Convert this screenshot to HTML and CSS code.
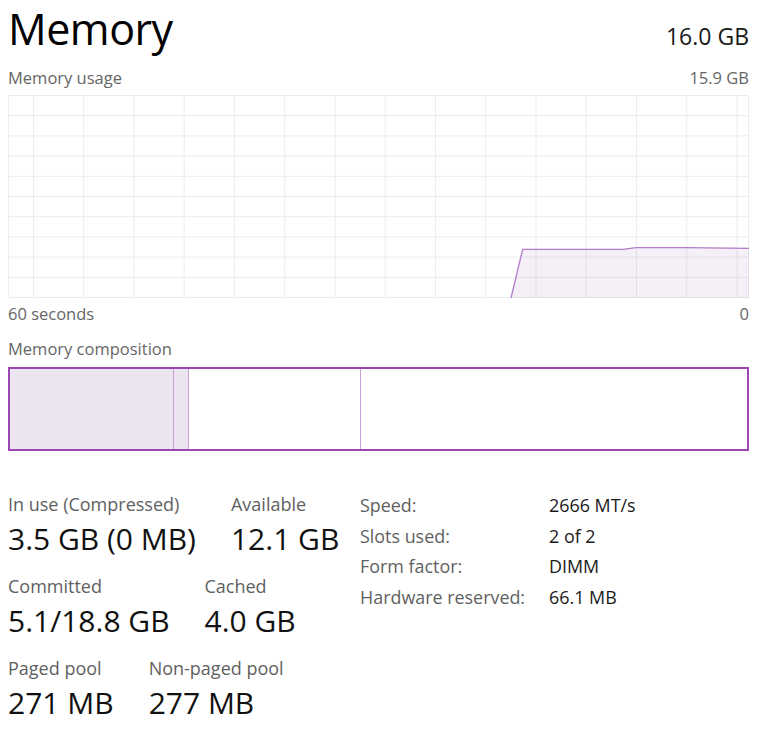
FILE: index.html
```html
<!DOCTYPE html>
<html lang="en">
<head>
<meta charset="utf-8">
<title>Memory</title>
<link rel="stylesheet" href="styles.css">
</head>
<body>
<main class="page">
  <header class="head">
    <h1 class="title">Memory</h1>
    <div class="total">16.0 GB</div>
  </header>

  <div class="sub-row first">
    <span>Memory usage</span>
    <span>15.9 GB</span>
  </div>

  <div class="chart">
    <svg class="chart-svg" viewBox="0 0 741 203" width="741" height="203" preserveAspectRatio="none">
      <g class="grid">
        <line x1="0" y1="0.5" x2="741" y2="0.5"/>
        <line x1="0" y1="20.7" x2="741" y2="20.7"/>
        <line x1="0" y1="40.9" x2="741" y2="40.9"/>
        <line x1="0" y1="61.1" x2="741" y2="61.1"/>
        <line x1="0" y1="81.3" x2="741" y2="81.3"/>
        <line x1="0" y1="101.5" x2="741" y2="101.5"/>
        <line x1="0" y1="121.7" x2="741" y2="121.7"/>
        <line x1="0" y1="141.9" x2="741" y2="141.9"/>
        <line x1="0" y1="162.1" x2="741" y2="162.1"/>
        <line x1="0" y1="182.3" x2="741" y2="182.3"/>
        <line x1="0" y1="202.5" x2="741" y2="202.5"/>
        <line x1="0.5" y1="0" x2="0.5" y2="203"/>
        <line x1="25.5" y1="0" x2="25.5" y2="203"/>
        <line x1="75.7" y1="0" x2="75.7" y2="203"/>
        <line x1="126" y1="0" x2="126" y2="203"/>
        <line x1="176.2" y1="0" x2="176.2" y2="203"/>
        <line x1="226.5" y1="0" x2="226.5" y2="203"/>
        <line x1="276.7" y1="0" x2="276.7" y2="203"/>
        <line x1="327" y1="0" x2="327" y2="203"/>
        <line x1="377.2" y1="0" x2="377.2" y2="203"/>
        <line x1="427.5" y1="0" x2="427.5" y2="203"/>
        <line x1="477.7" y1="0" x2="477.7" y2="203"/>
        <line x1="528" y1="0" x2="528" y2="203"/>
        <line x1="578.2" y1="0" x2="578.2" y2="203"/>
        <line x1="628.5" y1="0" x2="628.5" y2="203"/>
        <line x1="678.7" y1="0" x2="678.7" y2="203"/>
        <line x1="729" y1="0" x2="729" y2="203"/>
        <line x1="740.5" y1="0" x2="740.5" y2="203"/>
      </g>
      <polygon class="area" points="503,203 514.7,154.3 615,154.3 628,152.7 678.7,152.7 741,153.3 741,203"/>
      <polyline class="line" points="503,203 514.7,154.3 615,154.3 628,152.7 678.7,152.7 741,153.3"/>
    </svg>
  </div>

  <div class="sub-row axis">
    <span>60 seconds</span>
    <span>0</span>
  </div>

  <div class="sub-row comp-label">
    <span>Memory composition</span>
  </div>

  <div class="comp">
    <div class="seg inuse" style="width:164px"></div>
    <div class="seg modified" style="width:15px"></div>
    <div class="seg standby" style="width:172px"></div>
    <div class="seg free"></div>
  </div>

  <section class="stats">
    <div class="stats-left">
      <div class="stat-row">
        <div class="stat">
          <div class="label">In use (Compressed)</div>
          <div class="value">3.5 GB (0 MB)</div>
        </div>
        <div class="stat">
          <div class="label">Available</div>
          <div class="value">12.1 GB</div>
        </div>
      </div>
      <div class="stat-row">
        <div class="stat">
          <div class="label">Committed</div>
          <div class="value">5.1/18.8 GB</div>
        </div>
        <div class="stat">
          <div class="label">Cached</div>
          <div class="value">4.0 GB</div>
        </div>
      </div>
      <div class="stat-row">
        <div class="stat">
          <div class="label">Paged pool</div>
          <div class="value">271 MB</div>
        </div>
        <div class="stat">
          <div class="label">Non-paged pool</div>
          <div class="value">277 MB</div>
        </div>
      </div>
    </div>

    <dl class="props">
      <dt>Speed:</dt><dd>2666 MT/s</dd>
      <dt>Slots used:</dt><dd>2 of 2</dd>
      <dt>Form factor:</dt><dd>DIMM</dd>
      <dt>Hardware reserved:</dt><dd>66.1 MB</dd>
    </dl>
  </section>
</main>
</body>
</html>
```

FILE: styles.css
```css
* {
  box-sizing: border-box;
}

html, body {
  margin: 0;
  padding: 0;
  background: #ffffff;
}

body {
  font-family: "Open Sans", "Noto Sans", "Liberation Sans", sans-serif;
  color: #1a1a1a;
  width: 768px;
  height: 738px;
  overflow: hidden;
}

.page {
  padding: 0 19px 0 8px;
}

.head {
  display: flex;
  justify-content: space-between;
  align-items: baseline;
}

.title {
  margin: 0;
  font-size: 43px;
  font-weight: 400;
  line-height: 58px;
  color: #000000;
  letter-spacing: -0.5px;
}

.total {
  font-size: 23px;
  line-height: 30px;
  color: #1a1a1a;
}

.sub-row {
  display: flex;
  justify-content: space-between;
  font-size: 16.5px;
  line-height: 22px;
  color: #666666;
}

.sub-row.first {
  margin-top: 9px;
}

.chart {
  margin-top: 6px;
  height: 203px;
}

.chart-svg {
  display: block;
}

.grid line {
  stroke: #ececec;
  stroke-width: 1;
}

.area {
  fill: rgba(140, 80, 175, 0.09);
  stroke: none;
}

.line {
  fill: none;
  stroke: #b27cc9;
  stroke-width: 1.3;
}

.sub-row.axis {
  margin-top: 5px;
}

.sub-row.comp-label {
  margin-top: 13px;
  font-size: 16.5px;
}

.comp {
  margin-top: 7px;
  height: 84px;
  border: 2px solid #9a47b3;
  display: flex;
}

.seg {
  height: 100%;
  flex: none;
  border-right: 1px solid #c9a1d8;
}

.seg.inuse,
.seg.modified {
  background: #ede4f1;
}

.seg.standby {
  background: #ffffff;
}

.seg.free {
  flex: 1;
  border-right: none;
  background: #ffffff;
}

.stats {
  margin-top: 41px;
  display: flex;
  align-items: flex-start;
}

.stats-left {
  width: 352px;
  display: flex;
  flex-direction: column;
  gap: 12px;
}

.stat-row {
  display: flex;
  gap: 35px;
}

.label {
  font-size: 18px;
  line-height: 24px;
  color: #5f5f5f;
  white-space: nowrap;
}

.value {
  font-size: 30px;
  line-height: 46px;
  color: #111111;
  white-space: nowrap;
}

.props {
  margin: -2px 0 0 0;
  display: grid;
  grid-template-columns: 189px auto;
  align-content: start;
  font-size: 17.9px;
  line-height: 30.5px;
}

.props dt {
  color: #5f5f5f;
}

.props dd {
  margin: 0;
  color: #1a1a1a;
}
```
